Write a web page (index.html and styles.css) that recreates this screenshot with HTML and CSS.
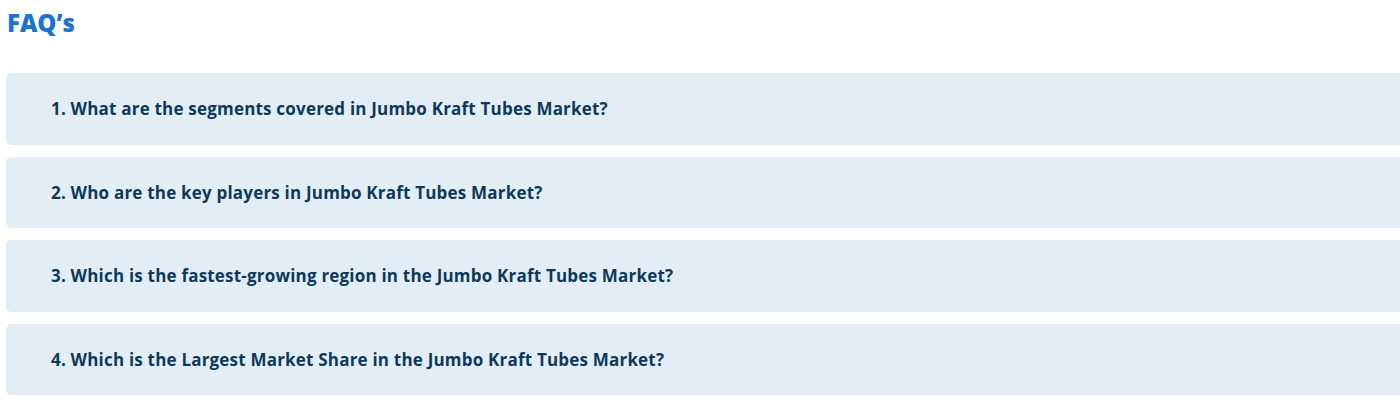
FILE: index.html
```html
<!DOCTYPE html>
<html lang="en">
<head>
  <meta charset="UTF-8" />
  <meta name="viewport" content="width=device-width, initial-scale=1.0"/>
  <title>FAQ's</title>
  <link rel="stylesheet" href="styles.css">
</head>
<body>

  <div class="faq">
    <h2 class="faq-title">FAQ’s</h2>

    <div class="faq-list">
      <div class="faq-item">1. What are the segments covered in Jumbo Kraft Tubes Market?</div>
      <div class="faq-item">2. Who are the key players in Jumbo Kraft Tubes Market?</div>
      <div class="faq-item">3. Which is the fastest-growing region in the Jumbo Kraft Tubes Market?</div>
      <div class="faq-item">4. Which is the Largest Market Share in the Jumbo Kraft Tubes Market?</div>
    </div>
  </div>

</body>
</html>
```

FILE: styles.css
```css
body {
  background-color: #fff;
  font-family: 'Open Sans', sans-serif;
  margin: 0;
  padding: 0;
  overflow: hidden;
}

.faq {
  padding: 6px 0 0 6px;
  width: 1420px;
}

.faq-title {
  color: #1c74d1;
  font-size: 24px;
  font-weight: 800;
  line-height: 34px;
  margin: 0 0 33px 1px;
}

.faq-list {
  display: flex;
  flex-direction: column;
  gap: 12px;
}

.faq-item {
  background-color: #e3edf6;
  border-radius: 5px;
  color: #0d3a5c;
  font-size: 17px;
  font-weight: 700;
  letter-spacing: 0.2px;
  height: 71.5px;
  line-height: 71px;
  padding-left: 45px;
  box-sizing: border-box;
}
```
